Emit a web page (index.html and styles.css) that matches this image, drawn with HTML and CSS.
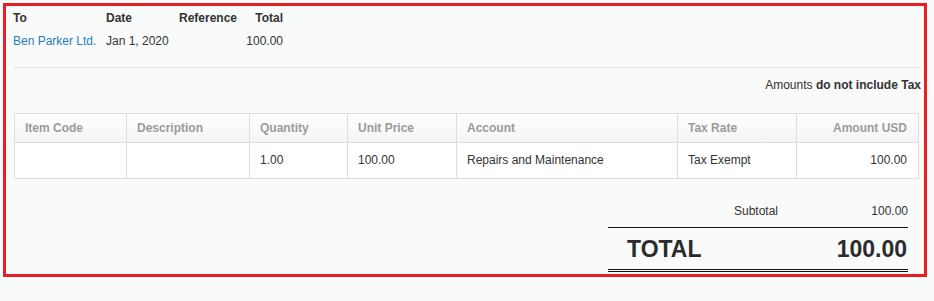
FILE: index.html
```html
<!DOCTYPE html>
<html>
<head>
<meta charset="utf-8">
<link rel="stylesheet" href="styles.css">
</head>
<body>
<div class="frame">
  <div class="summary">
    <div class="lbl">To</div>
    <div class="lbl">Date</div>
    <div class="lbl">Reference</div>
    <div class="lbl num">Total</div>
    <div class="val contact">Ben Parker Ltd.</div>
    <div class="val">Jan 1, 2020</div>
    <div class="val"></div>
    <div class="val num">100.00</div>
  </div>
  <div class="sep"></div>
  <div class="taxnote">Amounts <b>do not include Tax</b></div>
  <table class="lines">
    <colgroup>
      <col class="c1"><col class="c2"><col class="c3"><col class="c4"><col class="c5"><col class="c6"><col class="c7">
    </colgroup>
    <thead>
      <tr>
        <th>Item Code</th>
        <th>Description</th>
        <th>Quantity</th>
        <th>Unit Price</th>
        <th>Account</th>
        <th>Tax Rate</th>
        <th class="num">Amount USD</th>
      </tr>
    </thead>
    <tbody>
      <tr>
        <td></td>
        <td></td>
        <td>1.00</td>
        <td>100.00</td>
        <td>Repairs and Maintenance</td>
        <td>Tax Exempt</td>
        <td class="num">100.00</td>
      </tr>
    </tbody>
  </table>
  <div class="totals">
    <div class="subrow">
      <div class="sublbl">Subtotal</div>
      <div class="subval">100.00</div>
    </div>
    <div class="totrow">
      <div class="totlbl">TOTAL</div>
      <div class="totval">100.00</div>
    </div>
  </div>
</div>
</body>
</html>
```

FILE: styles.css
```css
html, body {
  margin: 0;
  padding: 0;
  background: #f9fafa;
}
body {
  font-family: "Liberation Sans", Arial, sans-serif;
  font-size: 12px;
  line-height: 16px;
  color: #333;
}
.frame {
  box-sizing: border-box;
  width: 924px;
  margin: 3px;
  border: 3px solid #ec1c24;
  padding: 4px 3px 2px 7px;
}
.summary {
  display: grid;
  grid-template-columns: 93px 73px 62px 42px;
  row-gap: 7px;
}
.lbl {
  font-weight: bold;
}
.num {
  text-align: right;
}
.contact {
  color: #1e80bd;
}
.sep {
  height: 1px;
  background: #e6e8ea;
  margin-top: 18px;
}
.taxnote {
  text-align: right;
  margin-top: 9px;
}
.lines {
  margin: 20px 0 0 1px;
  width: 905px;
  table-layout: fixed;
  border-collapse: separate;
  border-spacing: 0;
  border-top: 1px solid #dcdee0;
  border-left: 1px solid #dcdee0;
  background: #fff;
}
.c1 { width: 112px; }
.c2 { width: 123px; }
.c3 { width: 98px; }
.c4 { width: 109px; }
.c5 { width: 221px; }
.c6 { width: 119px; }
.c7 { width: 122px; }
.lines th, .lines td {
  border-right: 1px solid #dcdee0;
  border-bottom: 1px solid #dcdee0;
  text-align: left;
  padding-left: 10px;
  padding-right: 11px;
  white-space: nowrap;
}
.lines th {
  font-weight: bold;
  color: #9b9b9b;
  padding-top: 6px;
  padding-bottom: 6px;
  background: linear-gradient(#ffffff, #f3f4f5);
}
.lines td {
  padding-top: 9px;
  padding-bottom: 10px;
}
.lines .num {
  text-align: right;
}
.totals {
  width: 300px;
  margin: 24px 0 0 595px;
}
.subrow {
  display: grid;
  grid-template-columns: 170px 130px;
  padding-bottom: 8px;
  border-bottom: 1px solid #111;
}
.sublbl {
  text-align: right;
}
.subval {
  text-align: right;
}
.totrow {
  display: flex;
  justify-content: space-between;
  font-size: 23px;
  line-height: 28px;
  font-weight: bold;
  color: #2b2b2b;
  padding: 7px 1px 6px 19px;
  border-bottom: 3px double #111;
}
```
